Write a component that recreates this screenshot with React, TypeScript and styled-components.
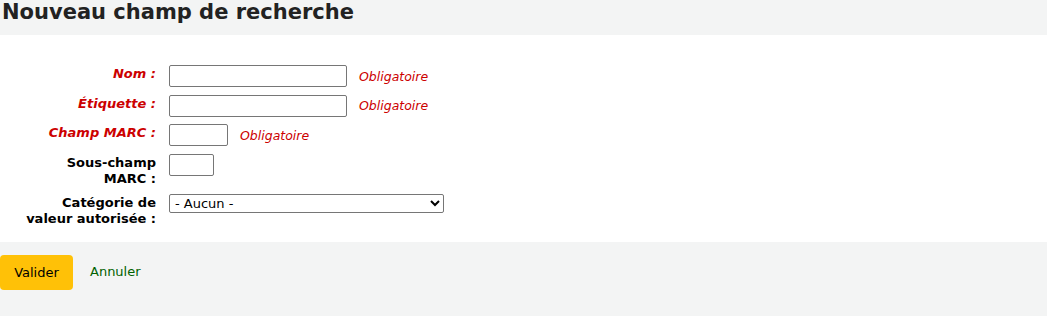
import React from 'react';
import styled, { createGlobalStyle } from 'styled-components';

const GlobalStyle = createGlobalStyle`
  html, body {
    margin: 0;
    padding: 0;
    background: #f3f4f4;
    font-family: "DejaVu Sans", "Liberation Sans", sans-serif;
    font-size: 13px;
    color: #000;
  }
`;

const Heading = styled.h1`
  margin: 0;
  padding: 0 2px;
  height: 35px;
  line-height: 24px;
  font-size: 21px;
  font-weight: bold;
  color: #222;
  background: #f3f4f4;
`;

const Fieldset = styled.fieldset`
  margin: 0;
  border: none;
  background: #fff;
  padding: 30px 0 7px 0;
`;

const List = styled.ol`
  list-style: none;
  margin: 0;
  padding: 0;
`;

const Row = styled.li`
  display: flex;
  align-items: flex-start;
  padding-bottom: 7.5px;
`;

const Label = styled.label<{ $required?: boolean }>`
  width: 130px;
  margin-left: 26px;
  margin-right: 13px;
  text-align: right;
  font-weight: bold;
  line-height: 16px;
  padding-top: 1px;
  flex-shrink: 0;
  color: ${p => (p.$required ? '#cc0000' : '#000')};
  font-style: ${p => (p.$required ? 'italic' : 'normal')};
`;

const Field = styled.div`
  display: flex;
  align-items: center;
`;

const TextInput = styled.input<{ $width: number }>`
  box-sizing: border-box;
  width: ${p => p.$width}px;
  height: 22px;
  border: 1px solid #767676;
  border-radius: 2px;
  padding: 1px 3px;
  font-family: inherit;
  font-size: 13px;
  background: #fff;
`;

const Required = styled.span`
  margin-left: 12px;
  color: #cc0000;
  font-style: italic;
  font-size: 12.5px;
`;

const Select = styled.select`
  box-sizing: border-box;
  width: 275px;
  height: 19px;
  border: 1px solid #767676;
  border-radius: 2px;
  padding: 0 1px;
  font-family: inherit;
  font-size: 13px;
  color: #000;
  background: #fff;
`;

const Actions = styled.div`
  display: flex;
  align-items: center;
  padding-top: 13px;
  gap: 17px;
`;

const SubmitButton = styled.button`
  width: 73px;
  height: 35px;
  border: none;
  border-radius: 4px;
  background: #ffc107;
  font-family: inherit;
  font-size: 13px;
  color: #000;
  cursor: pointer;
`;

const CancelLink = styled.a`
  color: #006100;
  text-decoration: none;
  font-size: 13px;
  margin-top: -2px;
`;

const App: React.FC = () => {
  return (
    <>
      <GlobalStyle />
      <Heading>Nouveau champ de recherche</Heading>
      <Fieldset>
        <List>
          <Row>
            <Label $required>Nom :</Label>
            <Field>
              <TextInput $width={178} />
              <Required>Obligatoire</Required>
            </Field>
          </Row>
          <Row>
            <Label $required>Étiquette :</Label>
            <Field>
              <TextInput $width={178} />
              <Required>Obligatoire</Required>
            </Field>
          </Row>
          <Row>
            <Label $required>Champ MARC :</Label>
            <Field>
              <TextInput $width={59} />
              <Required>Obligatoire</Required>
            </Field>
          </Row>
          <Row>
            <Label>Sous-champ MARC :</Label>
            <Field>
              <TextInput $width={45} />
            </Field>
          </Row>
          <Row>
            <Label>Catégorie de valeur autorisée :</Label>
            <Field>
              <Select defaultValue="">
                <option value="">- Aucun -</option>
              </Select>
            </Field>
          </Row>
        </List>
      </Fieldset>
      <Actions>
        <SubmitButton type="submit">Valider</SubmitButton>
        <CancelLink href="#">Annuler</CancelLink>
      </Actions>
    </>
  );
};

export default App;
